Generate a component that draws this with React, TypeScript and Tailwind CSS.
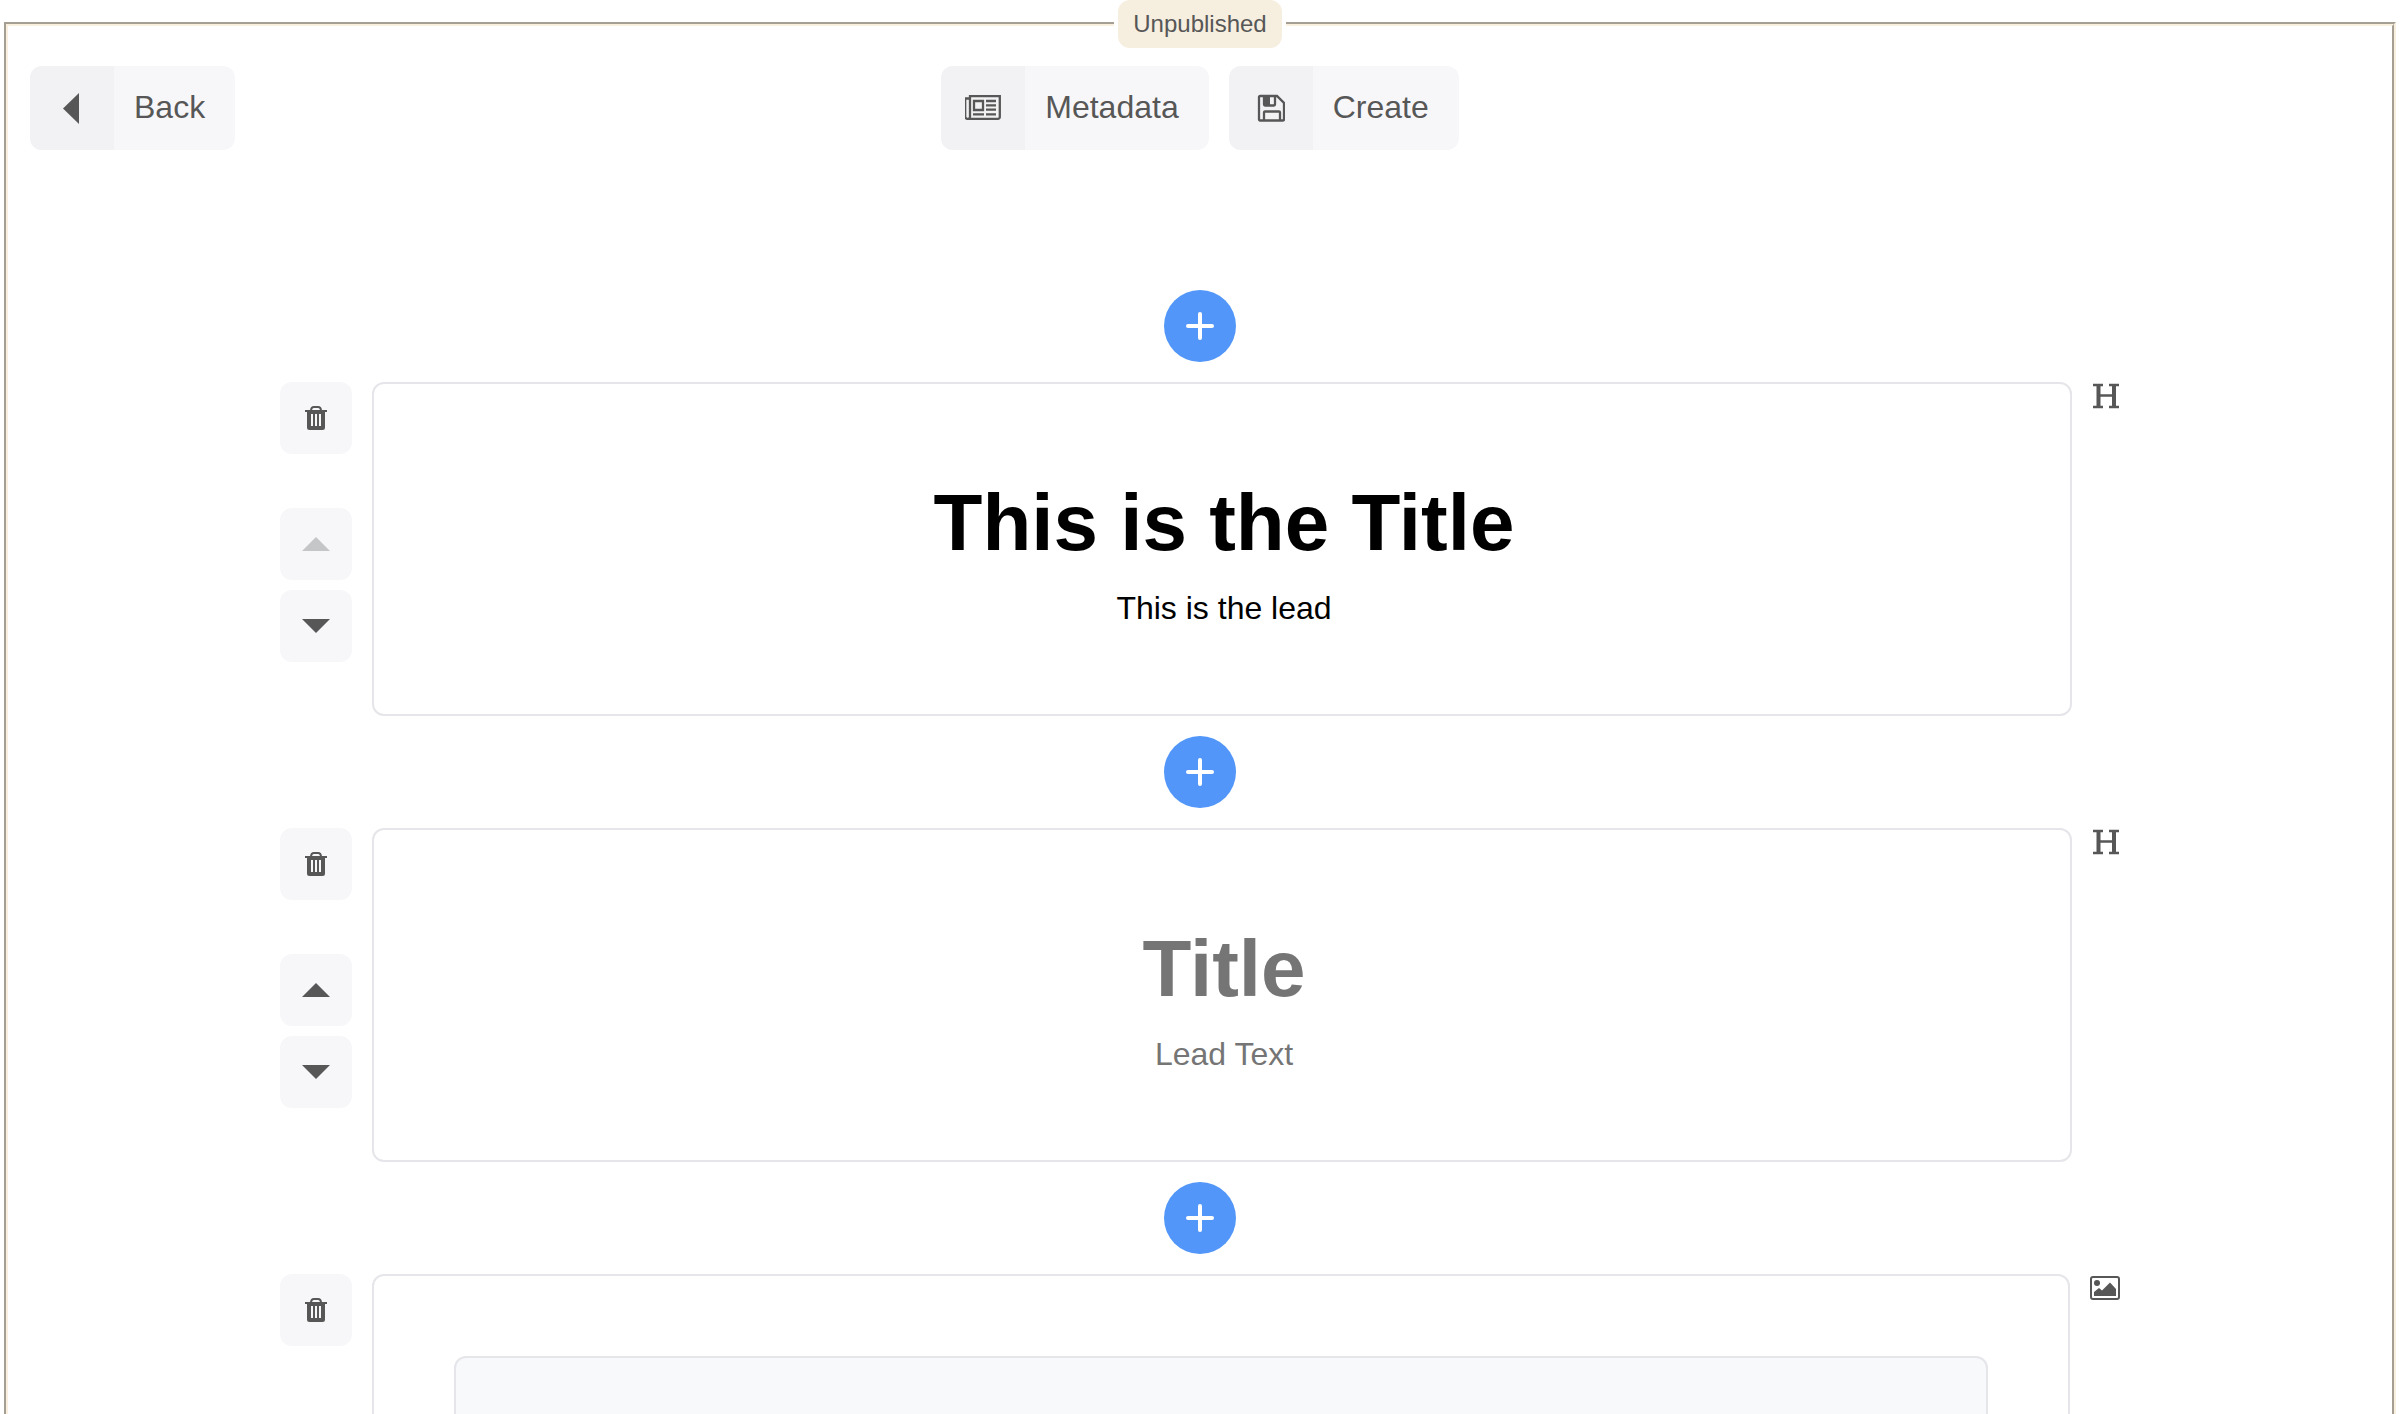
import React from "react";

function Svg({ w, h, children, className = "" }: { w: number; h: number; children: React.ReactNode; className?: string }) {
  return (
    <svg width={w} height={h} viewBox={`0 0 ${w} ${h}`} fill="none" className={className} aria-hidden="true">
      {children}
    </svg>
  );
}

const BackIcon = () => (
  <Svg w={32} h={32}>
    <path d="M23 1 7 16.5 23 32z" fill="currentColor" />
  </Svg>
);

const NewspaperIcon = () => (
  <Svg w={36} h={28}>
    <path
      d="M5 23V2.200H34.800V23a1.800 1.800 0 0 1-1.800 1.800H2.500A2 2 0 0 0 5 23M5 4.500H.2V22.500a2.200 2.200 0 0 0 2.300 2.300"
      stroke="currentColor"
      strokeWidth="2.3"
    />
    <path d="M9 7H18V16H9zM21 7H31M21 11.300H31M21 15.700H31M8 20.300H19M21 20.300H31" stroke="currentColor" strokeWidth="2.3" />
  </Svg>
);

const SaveIcon = () => (
  <Svg w={28} h={28}>
    <path d="M3 2H20L27 9V25.500a1 1 0 0 1-1 1H3a1 1 0 0 1-1-1V3a1 1 0 0 1 1-1z" stroke="currentColor" strokeWidth="2.3" />
    <path d="M7 26.500V18.500a1 1 0 0 1 1-1H22a1 1 0 0 1 1 1V26.500M7 2v8.500a1 1 0 0 0 1 1h9a1 1 0 0 0 1-1V2" stroke="currentColor" strokeWidth="2.3" />
    <path d="M7 2h6v10H7z" fill="currentColor" />
  </Svg>
);

const TrashIcon = () => (
  <Svg w={24} h={24}>
    <path d="M1 4H23V6H1z" fill="currentColor" />
    <path d="M7 5C7 2 8 1 10 1H14C16 1 17 2 17 5" stroke="currentColor" strokeWidth="2" />
    <path
      fillRule="evenodd"
      d="M3 5H21V21.500A2.500 2.500 0 0 1 18.500 24H5.500A2.500 2.500 0 0 1 3 21.500zM7 8V20H9V8zM11 8V20H13V8zM15 8V20H17V8z"
      fill="currentColor"
    />
  </Svg>
);

const UpIcon = () => (
  <Svg w={28} h={14}>
    <path d="M0 14 14 0 28 14z" fill="currentColor" />
  </Svg>
);

const DownIcon = () => (
  <Svg w={28} h={14}>
    <path d="M0 0H28L14 14z" fill="currentColor" />
  </Svg>
);

const PlusIcon = () => (
  <Svg w={28} h={28}>
    <path d="M14 2V26M2 14H26" stroke="currentColor" strokeWidth="4" strokeLinecap="round" />
  </Svg>
);

const HeadingIcon = () => (
  <Svg w={28} h={28}>
    <path d="M6.500 3V25M22 3V25" stroke="currentColor" strokeWidth="4" />
    <path d="M1 3H11M17 3H27M1 25H11M17 25H27M6 13.500H22" stroke="currentColor" strokeWidth="2.3" />
  </Svg>
);

const ImageIcon = () => (
  <Svg w={30} h={28}>
    <rect x="1" y="3" width="28" height="22" rx="2" stroke="currentColor" strokeWidth="2" />
    <circle cx="7" cy="9" r="3" fill="currentColor" />
    <path d="M4 22V18L9 14 12 16.500 20 8.500 26 15V22z" fill="currentColor" />
  </Svg>
);

function ToolbarButton({ icon, label }: { icon: React.ReactNode; label: string }) {
  return (
    <button type="button" className="flex h-[84px] overflow-hidden rounded-xl bg-[#f7f7fa] text-[32px] leading-10">
      <span className="flex h-full w-[84px] items-center justify-center bg-[#f2f2f5]">{icon}</span>
      <span className="flex h-full items-center pr-[30px] pb-0.5 pl-5">{label}</span>
    </button>
  );
}

function SquareButton({ label, disabled, children }: { label: string; disabled?: boolean; children: React.ReactNode }) {
  return (
    <button
      type="button"
      aria-label={label}
      disabled={disabled}
      className="flex size-[72px] items-center justify-center rounded-xl bg-[#f7f7fa] disabled:text-[#c5c6c7]"
    >
      {children}
    </button>
  );
}

function AddButton() {
  return (
    <button
      type="button"
      aria-label="Add block"
      className="mx-auto flex size-[72px] items-center justify-center rounded-full bg-[#5196f8] text-white"
    >
      <PlusIcon />
    </button>
  );
}

function Block({ first, icon, children }: { first?: boolean; icon: React.ReactNode; children: React.ReactNode }) {
  return (
    <section className="flex gap-5">
      <div className="flex flex-col">
        <SquareButton label="Delete block">
          <TrashIcon />
        </SquareButton>
        <div className="my-auto flex flex-col gap-2.5">
          <SquareButton label="Move block up" disabled={first}>
            <UpIcon />
          </SquareButton>
          <SquareButton label="Move block down">
            <DownIcon />
          </SquareButton>
        </div>
      </div>
      <div className="min-w-0 flex-1 rounded-xl border-2 border-[#e5e5ea] p-20">{children}</div>
      <div>{icon}</div>
    </section>
  );
}

function TitleFields({ title, lead }: { title?: string; lead?: string }) {
  return (
    <div className="flex flex-col pl-1 text-black">
      <input
        aria-label="Title"
        placeholder="Title"
        defaultValue={title}
        className="h-[118px] w-full bg-transparent text-center text-[80px] leading-[118px] font-bold outline-none placeholder:text-[#757575]"
      />
      <input
        aria-label="Lead text"
        placeholder="Lead Text"
        defaultValue={lead}
        className="h-[52px] w-full bg-transparent text-center text-[32px] leading-[52px] outline-none placeholder:text-[#757575]"
      />
    </div>
  );
}

export default function App() {
  return (
    <div className="h-screen overflow-hidden bg-white px-1 font-['Liberation_Sans',Arial,sans-serif] text-[#575757]">
      <fieldset className="border-4 border-[#f8efdf] [border-style:groove]">
        <legend className="mx-auto px-1">
          <span className="block rounded-xl bg-[#f6eedf] px-[15px] text-2xl leading-[48px]">Unpublished</span>
        </legend>
        <header className="mt-[18px] grid grid-cols-[1fr_auto_1fr] px-[22px]">
          <div className="flex">
            <ToolbarButton icon={<BackIcon />} label="Back" />
          </div>
          <div className="flex gap-5">
            <ToolbarButton icon={<NewspaperIcon />} label="Metadata" />
            <ToolbarButton icon={<SaveIcon />} label="Create" />
          </div>
        </header>
        <main className="mx-auto mt-[140px] flex max-w-[1840px] flex-col gap-5">
          <AddButton />
          <Block first icon={<HeadingIcon />}>
            <TitleFields title="This is the Title" lead="This is the lead" />
          </Block>
          <AddButton />
          <Block icon={<HeadingIcon />}>
            <TitleFields />
          </Block>
          <AddButton />
          <Block icon={<ImageIcon />}>
            <div className="h-[600px] rounded-xl border-2 border-[#e5e5ea] bg-[#f7f9fb]" />
          </Block>
        </main>
      </fieldset>
    </div>
  );
}
